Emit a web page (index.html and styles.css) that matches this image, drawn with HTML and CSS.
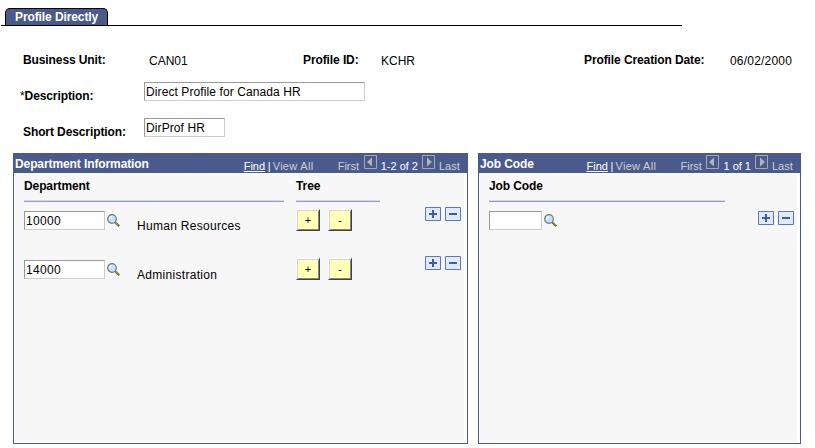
FILE: index.html
```html
<!DOCTYPE html>
<html lang="en">
<head>
  <meta charset="UTF-8">
  <meta name="viewport" content="width=device-width, initial-scale=1.0">
  <title>Profile Directly</title>
  <link rel="stylesheet" href="styles.css">
</head>
<body>
  <!-- shared icons -->
  <svg class="defs" width="0" height="0">
    <symbol id="lookup" viewBox="0 0 13 13">
      <path d="M8 8L12.2 12.2" stroke="#6f6b22" stroke-width="2.2"/>
      <path d="M8.2 7.8L11.6 11" stroke="#c9b568" stroke-width="0.8"/>
      <circle cx="5" cy="5" r="4.3" fill="#c5e2fb" stroke="#73777d" stroke-width="1.2"/>
      <path d="M2.6 5.2A2.6 2.6 0 0 1 5 2.6" stroke="#fff" stroke-width="1.4" fill="none"/>
    </symbol>
    <symbol id="prev" viewBox="0 0 13 14">
      <path d="M.5 .5H12.5V13.5H.5Z" fill="none" stroke="#a9a9ad"/>
      <path d="M3 7L8 2.5V11.5Z" fill="#b4b4b4"/>
    </symbol>
    <symbol id="next" viewBox="0 0 13 14">
      <path d="M.5 .5H12.5V13.5H.5Z" fill="none" stroke="#a9a9ad"/>
      <path d="M10 7L5 2.5V11.5Z" fill="#b4b4b4"/>
    </symbol>
    <symbol id="add" viewBox="0 0 16 14">
      <path d="M.5 .5H15.5V13.5H.5Z" fill="#dfeafc" stroke="#5c76bd"/>
      <path d="M4 6H12V8H4ZM7 3H9V11H7Z" fill="#3f5aa6"/>
    </symbol>
    <symbol id="remove" viewBox="0 0 16 14">
      <path d="M.5 .5H15.5V13.5H.5Z" fill="#dfeafc" stroke="#5c76bd"/>
      <path d="M4 6H12V8H4Z" fill="#3f5aa6"/>
    </symbol>
  </svg>

  <div class="tabs">
    <div class="tab">Profile Directly</div>
  </div>

  <div class="form">
    <div class="row ids">
      <label>Business Unit:</label><span class="value">CAN01</span>
      <label>Profile ID:</label><span class="value">KCHR</span>
      <label>Profile Creation Date:</label><span class="value date">06/02/2000</span>
    </div>
    <div class="row">
      <label class="required"><span class="star">*</span>Description:</label>
      <input class="long" type="text" value="Direct Profile for Canada HR">
    </div>
    <div class="row">
      <label>Short Description:</label>
      <input class="medium" type="text" value="DirProf HR">
    </div>
  </div>

  <div class="panels">
    <div class="panel departments">
      <div class="panel-head">
        <span class="title info">Department Information</span>
        <div class="nav">
          <a class="find">Find</a><span class="bar">|</span><span class="all">View All</span>
          <span class="first">First</span>
          <svg class="arrow"><use href="#prev"/></svg>
          <span class="count">1-2 of 2</span>
          <svg class="arrow"><use href="#next"/></svg>
          <span class="last">Last</span>
        </div>
      </div>
      <div class="panel-body">
        <div class="cols">
          <div class="col dept">Department</div>
          <div class="col tree">Tree</div>
        </div>
        <div class="line">
          <input class="medium code" type="text" value="10000">
          <svg class="lookup"><use href="#lookup"/></svg>
          <span class="name">Human Resources</span>
          <button>+</button>
          <button>-</button>
          <div class="edit">
            <svg><use href="#add"/></svg>
            <svg><use href="#remove"/></svg>
          </div>
        </div>
        <div class="line">
          <input class="medium code" type="text" value="14000">
          <svg class="lookup"><use href="#lookup"/></svg>
          <span class="name">Administration</span>
          <button>+</button>
          <button>-</button>
          <div class="edit">
            <svg><use href="#add"/></svg>
            <svg><use href="#remove"/></svg>
          </div>
        </div>
      </div>
    </div>

    <div class="panel jobs">
      <div class="panel-head">
        <span class="title">Job Code</span>
        <div class="nav">
          <a class="find">Find</a><span class="bar">|</span><span class="all">View All</span>
          <span class="first">First</span>
          <svg class="arrow"><use href="#prev"/></svg>
          <span class="count">1 of 1</span>
          <svg class="arrow"><use href="#next"/></svg>
          <span class="last">Last</span>
        </div>
      </div>
      <div class="panel-body">
        <div class="cols">
          <div class="col job">Job Code</div>
        </div>
        <div class="line">
          <input class="short" type="text">
          <svg class="lookup"><use href="#lookup"/></svg>
          <div class="edit">
            <svg><use href="#add"/></svg>
            <svg><use href="#remove"/></svg>
          </div>
        </div>
      </div>
    </div>
  </div>
</body>
</html>
```
FILE: styles.css
```css
* {
  box-sizing: border-box;
}
body {
  margin: 0;
  height: 448px;
  overflow: hidden;
  background: #fff;
  color: #000;
  font: 12px/14px "Liberation Sans", Arial, sans-serif;
  white-space: nowrap;
}
.defs {
  display: none;
}
.tabs {
  width: 681px;
  height: 26px;
  margin-left: 1px;
  padding: 8px 0 0 4px;
  border-bottom: 1px solid #000;
}
.tab {
  width: 103px;
  height: 17px;
  padding: 2px 0 0 9px;
  background: #4a5a8c;
  border: 1px solid #000;
  border-bottom: none;
  border-radius: 5px 5px 0 0;
  color: #fff;
  font-weight: bold;
  line-height: 13px;
  letter-spacing: -0.1px;
}

/* header fields */
.form {
  height: 127px;
  padding: 27px 0 0 23px;
}
.row {
  display: flex;
  height: 36px;
}
.row.ids {
  height: 29px;
}
label {
  width: 121px;
  font-weight: bold;
  letter-spacing: -0.1px;
}
.row:not(.ids) label {
  margin-top: 7px;
}
.row .required {
  width: 124px;
  margin-left: -3px;
}
.star {
  font-weight: normal;
}
.value {
  margin-top: 1px;
}
.ids {
  display: grid;
  grid-template-columns: 126px 154px 78px 203px 146px 80px;
}
.date {
  letter-spacing: 0.2px;
}
input {
  height: 19px;
  margin: 0;
  padding: 1px 1px 0;
  background: #fff;
  border: 1px solid #ccc;
  border-top-color: #999;
  border-left-color: #999;
  font: inherit;
  letter-spacing: 0.1px;
}
.long {
  width: 221px;
}
.medium {
  width: 81px;
}
.short {
  width: 53px;
}
.code {
  letter-spacing: 0.3px;
}

/* scroll areas */
.panels {
  display: flex;
  gap: 10px;
  height: 291px;
  margin-left: 13px;
}
.panel {
  display: flex;
  flex-direction: column;
  border: 1px solid #4a5a8c;
  border-top: none;
}
.departments {
  width: 455px;
}
.jobs {
  width: 323px;
}
.panel-head {
  display: flex;
  justify-content: space-between;
  height: 20px;
  margin: 0 -1px;
  padding: 4px 8px 0 2px;
  background: #4a5a8c;
  color: #fff;
}
.title {
  font-weight: bold;
  letter-spacing: -0.1px;
}
.nav {
  display: flex;
  height: 16px;
  padding-top: 2px;
  color: #d0d0d0;
  font-size: 11px;
}
.find {
  width: 24px;
  color: #fff;
  text-decoration: underline;
  text-underline-offset: 1px;
}
.bar {
  width: 5px;
  color: #fff;
}
.all {
  width: 65px;
  letter-spacing: 0.3px;
}
.first {
  width: 26px;
}
.arrow {
  width: 13px;
  height: 14px;
  margin-top: -4px;
}
.count {
  padding: 0 4px;
  color: #fff;
}
.last {
  width: 21px;
  margin-left: 4px;
}
.panel-body {
  flex: 1;
  margin: 1px 3px 1px 1px;
  padding: 5px 3px 0 9px;
  background: #f7f7f7;
}
.cols {
  display: flex;
  gap: 12px;
  margin-bottom: 7px;
}
.col {
  height: 23px;
  border-bottom: 1px solid #8c9ac6;
  box-shadow: inset 0 -1px #d6dbec;
  font-weight: bold;
  letter-spacing: -0.1px;
}
.dept {
  width: 260px;
}
.tree {
  width: 84px;
}
.job {
  width: 236px;
}
.line {
  display: flex;
  height: 49px;
}
.line input {
  margin-top: 2px;
}
.lookup {
  width: 13px;
  height: 13px;
  margin: 5px 0 0 2px;
}
.name {
  width: 159px;
  margin: 10px 0 0 17px;
  letter-spacing: 0.3px;
}
.line button {
  width: 24px;
  height: 22px;
  margin-right: 8px;
  padding: 0;
  background: #ffffb5;
  border: 1px solid;
  border-color: #fff #404040 #404040 #fff;
  box-shadow: inset 1px 1px #d6d3ce, inset -1px -1px #848284;
  font: 11px "Liberation Sans", Arial, sans-serif;
}
.edit {
  display: flex;
  gap: 4px;
  margin-left: auto;
}
.departments .edit {
  margin-top: -2px;
}
.jobs .edit {
  margin-top: 2px;
}
.edit svg {
  width: 16px;
  height: 14px;
}
```
